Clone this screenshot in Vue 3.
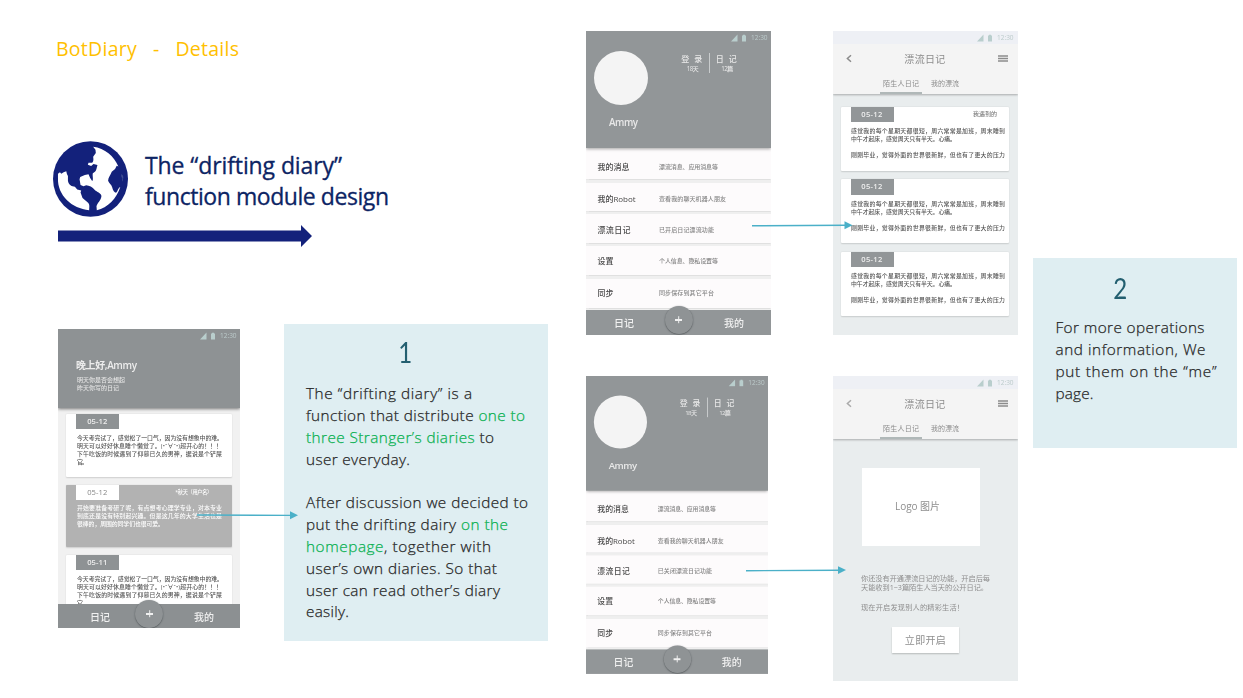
<script setup>
// Spreads a single line of text over the given width in pixels.
const vFit = {
  mounted(el, { value }) {
    const natural = parseFloat(getComputedStyle(el).width)
    const gaps = Math.max(1, [...el.textContent].length - 1)
    el.style.letterSpacing = `${(value - natural) / gaps}px`
  },
}

const deckTitle = 'BotDiary   -   Details'

const noteOne = [
  [
    { w: 166, parts: [['The “drifting diary” is a']] },
    { w: 219, parts: [['function that distribute '], ['one to', true]] },
    { w: 188, parts: [['three Stranger’s diaries', true], [' to']] },
    { w: 104, parts: [['user everyday.']] },
  ],
  [
    { w: 222, parts: [['After discussion we decided to']] },
    { w: 202, parts: [['put the drifting dairy '], ['on the', true]] },
    { w: 185, parts: [['homepage', true], [', together with']] },
    { w: 191, parts: [['user’s own diaries. So that']] },
    { w: 194, parts: [['user can read other’s diary']] },
    { w: 43, parts: [['easily.']] },
  ],
]
const noteTwo = [
  { w: 149, text: 'For more operations' },
  { w: 150, text: 'and information, We' },
  { w: 161, text: 'put them on the “me”' },
  { w: 38, text: 'page.' },
]

const today = [
  { w: 146, text: '今天考完试了，感觉松了一口气，因为没有想象中的难。' },
  { w: 145, text: '明天可以好好休息睡个懒觉了。(•ˇ∀ˇ•)超开心的！！！' },
  { w: 145, text: '下午吃饭的时候遇到了仰慕已久的男神，据说是个铲屎' },
  { w: 11, text: '官。' },
]
const homeCards = [
  { date: '05-12', lines: today },
  {
    date: '05-12', shared: true, from: '*秋天（用户名）',
    lines: [
      { w: 145, text: '开始要准备考研了呢，有点想考心理学专业，对本专业' },
      { w: 145, text: '到底还是没有特别起兴趣。但是这几年的大学生活也是' },
      { w: 87, text: '很棒的，周围的同学们也很可爱。' },
    ],
  },
  { date: '05-11', lines: today },
]

const menuOf = (drift, driftWidth) => [
  { name: '我的消息', w: 32, hint: '漂流消息、应用消息等', hw: 59 },
  { name: '我的Robot', w: 38, hint: '查看我的聊天机器人朋友', hw: 67 },
  { name: '漂流日记', w: 33, hint: drift, hw: driftWidth },
  { name: '设置', w: 16, hint: '个人信息、隐私设置等', hw: 59 },
  { name: '同步', w: 16, hint: '同步保存到其它平台', hw: 55 },
]
const mePages = [
  { key: 'on', menu: menuOf('已开启日记漂流功能', 55) },
  { key: 'off', menu: menuOf('已关闭漂流日记功能', 55) },
]
const driftPages = ['list', 'empty']
const driftLines = [
  { w: 154, text: '感觉我的每个星期天都很短，周六常常是加班，周末睡到' },
  { w: 105, text: '中午才起床，感觉周天只有半天。心痛。' },
  { w: 154, text: '刚刚毕业，觉得外面的世界很新鲜，但也有了更大的压力' },
]
</script>

<template>
  <main class="slide">
    <section class="intro">
      <h1 class="deck"><span v-fit="183">{{ deckTitle }}</span></h1>
      <div class="topic">
        <svg class="globe" viewBox="0 0 226 228">
          <ellipse cx="113" cy="114" rx="113" ry="114" fill="#13217b" />
          <g fill="#fff" transform="translate(-39 -363)">
            <path d="M160 380C195 384 223 409 236 439L231 437L226 447L216 455C213 464 205 473 205 482C208 491 215 492 217 501C220 514 225 519 230 518C234 512 235 505 242 500C231 536 204 563 171 571L170 559C173 547 184 542 185 528C183 518 171 516 165 510C158 501 148 497 139 496L131 499L122 495L119 478L121 471L135 465L146 463L151 474L157 483C162 480 157 468 159 460C170 455 170 446 173 435L161 432L154 438L144 434L146 428L157 428C162 423 161 418 160 410L168 399L167 389Z" />
            <path d="M54 461L60 457L64 461L71 457L79 454L81 462L84 468L84 482C86 496 96 499 105 500L112 509L124 512L122 518L128 534L143 547C151 553 148 562 148 571C96 567 52 526 54 475Z" />
            <path d="M244 463Q250 464 251 471L249 485Q246 482 248 475Q244 471 244 463Z" fill="#3e4d92" />
          </g>
        </svg>
        <h2 class="heading">
          <span v-fit="197">The “drifting diary”</span>
          <span v-fit="244">function module design</span>
        </h2>
      </div>
      <svg class="big-arrow" viewBox="0 0 254 22">
        <path d="M0 5.5H243V0L254 11L243 22V16.5H0Z" fill="#13217b" />
      </svg>

      <div class="row">
        <article class="phone home">
          <header class="home-head">
            <div class="status">
              <svg viewBox="0 0 15 8"><path d="M0 7.5L6.5 0.5V7.5ZM11 1.5H12V.7H14V1.5H15V7.5H11Z" /></svg>
              <span v-fit="15">12:30</span>
            </div>
            <div class="greeting"><span v-fit="61">晚上好,Ammy</span></div>
            <p class="home-sub"><span v-fit="48">明天你是否会想起</span><span v-fit="42">昨天你写的日记</span></p>
          </header>
          <div class="home-list">
            <div v-for="(card, i) in homeCards" :key="i" class="card" :class="{ shared: card.shared }">
              <div class="card-top">
                <b class="tag"><span v-fit="20">{{ card.date }}</span></b>
                <span v-if="card.from" v-fit="37" class="from">{{ card.from }}</span>
              </div>
              <p class="lines"><span v-for="(l, n) in card.lines" :key="n" v-fit="l.w">{{ l.text }}</span></p>
            </div>
          </div>
          <footer class="tabbar"><span>日记</span><i class="plus"></i><span>我的</span></footer>
        </article>

        <aside class="note note-one">
          <div class="num">1</div>
          <p v-for="(lines, g) in noteOne" :key="g">
            <span v-for="(l, n) in lines" :key="n" v-fit="l.w" class="line"><span v-for="(p, k) in l.parts" :key="k" :class="{ green: p[1] }">{{ p[0] }}</span></span>
          </p>
        </aside>
      </div>
    </section>

    <section class="stack">
      <article v-for="page in mePages" :key="page.key" class="phone me" :class="page.key">
        <header class="me-head">
          <div class="status">
            <svg viewBox="0 0 15 8"><path d="M0 7.5L6.5 0.5V7.5ZM11 1.5H12V.7H14V1.5H15V7.5H11Z" /></svg>
            <span v-fit="15">12:30</span>
          </div>
          <div class="profile">
            <div class="avatar"></div>
            <div class="stats">
              <div><span v-fit="21">登 录</span><small v-fit="12">18天</small></div>
              <div><span v-fit="21">日 记</span><small v-fit="12">12篇</small></div>
            </div>
          </div>
          <div class="me-name"><span v-fit="29">Ammy</span></div>
        </header>
        <ul class="menu">
          <li v-for="m in page.menu" :key="m.name">
            <div><span v-fit="m.w">{{ m.name }}</span></div>
            <div class="hint"><span v-fit="m.hw">{{ m.hint }}</span></div>
          </li>
        </ul>
        <footer class="tabbar"><span>日记</span><i class="plus"></i><span>我的</span></footer>
      </article>
    </section>

    <section class="stack">
      <article v-for="page in driftPages" :key="page" class="phone drift" :class="page">
        <header class="drift-head">
          <div class="status">
            <svg viewBox="0 0 15 8"><path d="M0 7.5L6.5 0.5V7.5ZM11 1.5H12V.7H14V1.5H15V7.5H11Z" /></svg>
            <span v-fit="15">12:30</span>
          </div>
          <div class="navbar">
            <svg class="back" viewBox="0 0 6 8"><path d="M5 .8L1.4 4L5 7.2" fill="none" stroke-width="1.5" /></svg>
            <span v-fit="41">漂流日记</span>
            <svg class="burger" viewBox="0 0 10 7"><path d="M0 1H10M0 3.5H10M0 6H10" stroke-width="1.4" /></svg>
          </div>
          <nav class="tabs">
            <div class="active"><span v-fit="36">陌生人日记</span></div>
            <div><span v-fit="28">我的漂流</span></div>
          </nav>
        </header>
        <div v-if="page === 'list'" class="drift-list">
          <div v-for="i in 3" :key="i" class="card">
            <div class="card-top">
              <b class="tag"><span v-fit="21">05-12</span></b>
              <span v-if="i === 1" v-fit="24" class="from">我遇到的</span>
            </div>
            <p class="lines"><span v-for="(l, n) in driftLines" :key="n" v-fit="l.w">{{ l.text }}</span></p>
          </div>
        </div>
        <div v-else class="empty-body">
          <div class="logo-box"><span v-fit="45">Logo 图片</span></div>
          <p class="pitch">
            <span v-fit="129">你还没有开通漂流日记的功能，开启后每</span>
            <span v-fit="127">天能收到1~3篇陌生人当天的公开日记。</span>
            <span v-fit="103">现在开启发现别人的精彩生活！</span>
          </p>
          <div class="open"><span v-fit="41">立即开启</span></div>
        </div>
      </article>
    </section>

    <aside class="note note-two">
      <div class="num">2</div>
      <p><span v-for="l in noteTwo" :key="l.text" v-fit="l.w" class="line">{{ l.text }}</span></p>
    </aside>

    <svg class="connectors" viewBox="0 0 1243 698">
      <g stroke="#4bb0c8" stroke-width="1.4">
        <path d="M197 515L291 515.4" /><path d="M752 225.8L846 225.3" /><path d="M746 570.7L840 570.2" />
      </g>
      <g fill="#4bb0c8">
        <path d="M290 511.2L298 515.2L290 519.2Z" /><path d="M844.5 221.3L852.5 225.2L844.5 229.2Z" /><path d="M838 566.2L846 570.1L838 574.1Z" />
      </g>
    </svg>
  </main>
</template>

<style>
body { background: #fff; }
</style>

<style scoped>
* { box-sizing: border-box; margin: 0; padding: 0; }
.slide {
  position: relative; width: 1243px; height: 698px; overflow: hidden; background: #fff;
  display: grid; grid-template-columns: 586px 247px 200px 204px; align-items: start;
  font-family: "Open Sans", "Noto Sans CJK SC", sans-serif;
}
span, small { display: inline-block; white-space: pre; }
.line span { display: inline; }
.intro { padding-left: 53px; }
.deck { margin: 34px 0 0 3px; height: 30px; font-size: 19.5px; line-height: 30px; font-weight: 400; color: #ffc000; }
.topic { display: flex; gap: 17px; margin-top: 77px; height: 76px; }
.globe { width: 75px; height: 76px; }
.heading { display: flex; flex-direction: column; align-items: flex-start; margin-top: 9px; font-size: 23px; line-height: 31px; font-weight: 400; color: #0c2464; -webkit-text-stroke: 0.3px #0c2464; }
.big-arrow { display: block; margin: 8px 0 0 5px; width: 254px; height: 22px; }
.row { display: flex; gap: 44px; margin: 77px 0 0 5px; }

.note { background: #dfeef2; color: #262626; font-size: 15.3px; line-height: 21.85px; font-weight: 300; -webkit-text-stroke: 0.25px currentColor; }
.note p { display: flex; flex-direction: column; align-items: flex-start; }
.note-one { width: 264px; height: 317px; padding: 10px 0 0 22px; }
.note-one .num { margin-left: 91px; }
.num { width: 17px; height: 37px; font-family: Lato, sans-serif; font-size: 28px; line-height: 37px; color: #235f70; font-weight: 400; -webkit-text-stroke: 0; transform: scaleX(0.86); }
.note-one p { margin-top: 12px; }
.note-one p + p { margin-top: 21.85px; }
.note-two { height: 190px; margin-top: 258px; padding: 12px 0 0 22.5px; }
.note-two .num { margin-left: 56px; }
.note-two p { margin-top: 10px; }
.green { color: #08b050; -webkit-text-stroke-color: #08b050; }

.phone { display: flex; flex-direction: column; overflow: hidden; width: 185px; height: 304px; }
.phone span, .phone small { filter: blur(0.35px); }
.status { display: flex; justify-content: flex-end; align-items: center; gap: 5px; height: 13px; padding-right: 5px; font-size: 6.5px; line-height: 13px; color: #bccbcb; }
.status svg { width: 15px; height: 8px; fill: #b9cecd; filter: blur(0.2px); }
.status span { width: 15px; }
.tabbar { position: relative; z-index: 2; flex: none; height: 25px; margin-top: auto; display: flex; justify-content: space-between; align-items: center; padding: 1px 27px 0 28px; background: #929698; color: #f1f1f1; font-size: 10px; line-height: 24px; font-weight: 500; }
.plus { position: absolute; left: calc(50% - 14px); top: -4px; width: 28px; height: 28px; border-radius: 50%; background: #8f9395; box-shadow: 0 0.5px 1.5px rgba(50, 55, 58, 0.75); }
.plus::before, .plus::after { content: ""; position: absolute; left: 10.5px; top: 13.3px; width: 7px; height: 1.4px; background: #f0f0f0; }
.plus::after { transform: rotate(90deg); }

.home { width: 182px; height: 299px; margin-top: 5px; background: #f1f1f1; }
.home-head { position: relative; z-index: 1; flex: none; height: 79px; background: #8e9294; box-shadow: 0 1px 3px rgba(0, 0, 0, 0.5); color: #ececec; }
.greeting { margin: 14px 0 0 18px; height: 18px; font-size: 10px; line-height: 18px; font-weight: 600; }
.home-sub { display: flex; flex-direction: column; align-items: flex-start; margin: 2px 0 0 19px; font-size: 6px; line-height: 8px; color: #e2e2e2; font-weight: 500; }
.home-list { height: 196px; overflow: hidden; display: flex; flex-direction: column; gap: 8px; padding: 6px 8px 0; }
.card { flex: none; height: 62.5px; background: #fff; border-radius: 1px; box-shadow: 0 0.5px 1.5px rgba(0, 0, 0, 0.14); }
.card-top { display: flex; justify-content: space-between; height: 15px; padding: 0 20px 0 10px; }
.tag { width: 42.5px; height: 15px; background: #8e9294; color: #eee; font-size: 7.6px; line-height: 15.5px; font-weight: 600; text-align: center; }
.from { font-size: 5.2px; line-height: 14px; height: 14px; color: #6a6a6a; }
.lines { display: flex; flex-direction: column; align-items: flex-start; margin: 4.5px 0 0 11px; font-size: 5.9px; line-height: 8px; color: #565656; font-weight: 500; }
.lines span { height: 8px; }
.shared { background: #b2b2b2; }
.shared .tag { background: #fff; color: #888; font-weight: 500; }
.shared .lines, .shared .from { color: #fff; font-weight: 500; }
.home .tabbar { height: 24px; background: #8c9092; padding: 1px 26px 0 32px; }

.me { background: #efefef; transform-origin: 0 0; }
.stack { display: flex; flex-direction: column; gap: 41px; padding-top: 31px; }
.me.off { transform: scale(0.984, 0.98); }
.me-head { position: relative; z-index: 1; flex: none; height: 117px; background: #929698; box-shadow: 0 1px 3px rgba(0, 0, 0, 0.35); color: #e8e8e8; }
.profile { display: flex; padding: 7px 0 0 8px; }
.avatar { width: 54px; height: 54px; border-radius: 50%; background: #f4f4f4; }
.stats { display: flex; height: 20px; margin: 2px 0 0 29px; font-weight: 500; }
.stats div { width: 32px; display: flex; flex-direction: column; align-items: center; padding-right: 1px; line-height: 11px; font-size: 8px; }
.stats div + div { border-left: 1px solid #c9cccd; padding: 0 0 0 3px; }
.stats small { font-size: 6.2px; line-height: 9px; }
.me-name { margin: 9.5px 0 0 23px; font-size: 9.8px; line-height: 16px; font-weight: 600; }
.menu { list-style: none; display: grid; grid-template-rows: 31px 28px 28.5px 29px 29.5px; row-gap: 3.5px; }
.menu li { display: grid; grid-template-columns: 61.5px 1fr; align-items: center; padding: 4px 0 0 11.5px; background: #fdfbfc; box-shadow: 0 0.5px 1px rgba(0, 0, 0, 0.06); font-size: 8px; line-height: 12px; color: #4a4a4a; font-weight: 500; }
.menu li:nth-child(1) { padding-top: 6px; }
.menu li:nth-child(4) { padding-top: 1px; }
.menu li:nth-child(5) { padding-top: 0; }
.menu .hint { font-size: 6px; color: #858585; }

.drift { background: #e9edee; }
.drift.empty { height: 305px; }
.drift-head { position: relative; z-index: 1; flex: none; height: 63px; background: #f4f4f4; box-shadow: 0 1px 2px rgba(0, 0, 0, 0.28); color: #8c8c8c; }
.drift-head .status { background: #eef0f5; padding-right: 6px; }
.navbar { display: flex; justify-content: space-between; align-items: center; height: 30px; padding: 0 10px 0 13px; font-size: 10px; line-height: 14px; }
.navbar svg { stroke: #8c8c8c; }
.back { width: 6px; height: 9px; margin-top: -2px; }
.empty .back { opacity: 0.7; }
.burger { width: 10px; height: 7px; margin-top: -1px; }
.tabs { display: flex; height: 20px; padding-left: 47px; font-size: 7px; line-height: 19px; gap: 9px; }
.tabs div { height: 20px; }
.tabs .active { width: 42px; padding-left: 3px; border-bottom: 2px solid #b0b8b8; }
.drift-list { display: flex; flex-direction: column; gap: 8.5px; padding: 12.5px 9px 0 7.5px; }
.drift .card { height: 64px; }
.drift .card-top { padding-right: 12px; }
.drift .from { font-size: 6px; }
.drift .tag { width: 43px; height: 15.5px; background: #929698; }
.drift .lines { margin-left: 10.5px; margin-top: 5.5px; }
.drift .lines span:last-child { margin-top: 8px; }
.empty-body { padding: 29px 0 0 29px; color: #8e8e8e; }
.logo-box { width: 118px; height: 78px; background: #fff; text-align: center; font-size: 10px; line-height: 77px; padding-right: 7px; }
.pitch { display: flex; flex-direction: column; align-items: flex-start; margin: 27.5px 0 0 -1px; font-size: 7.2px; line-height: 9.8px; }
.pitch span { height: 9.8px; }
.pitch span:last-child { margin-top: 9.8px; }
.open { width: 67px; height: 26px; margin: 14.5px 0 0 30px; background: #fff; text-align: center; font-size: 10px; line-height: 27px; box-shadow: 0 1px 1.5px rgba(0, 0, 0, 0.22); }
.connectors { position: absolute; inset: 0; width: 1243px; height: 698px; z-index: 5; pointer-events: none; }
</style>
